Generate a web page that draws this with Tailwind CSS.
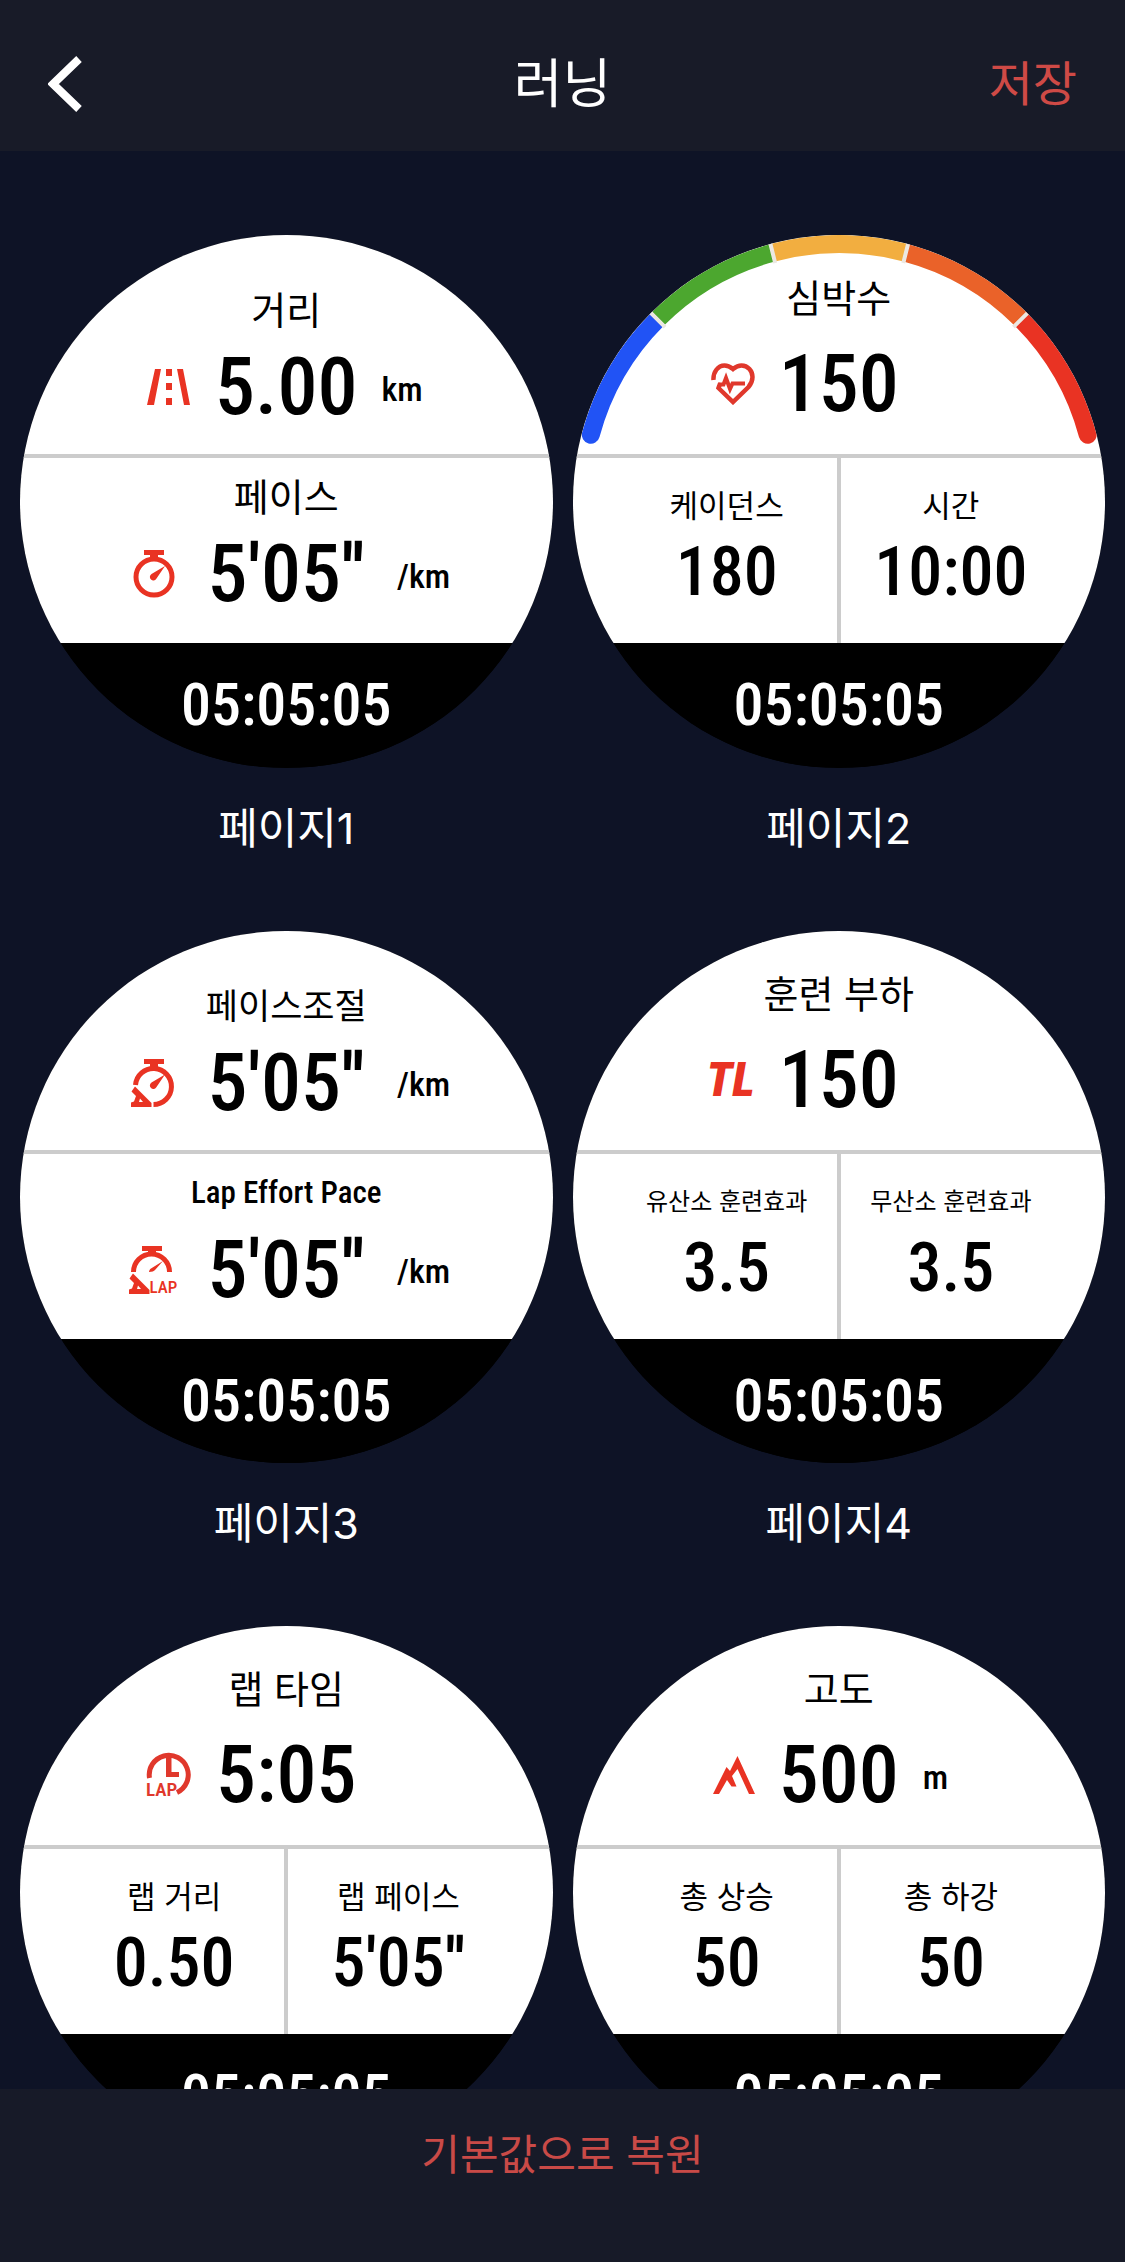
<!DOCTYPE html>
<html lang="ko">
<head>
  <meta charset="UTF-8">
  <meta name="viewport" content="width=device-width, initial-scale=1.0">
  <title>러닝</title>
  <script src="https://cdn.jsdelivr.net/npm/@tailwindcss/browser@4"></script>
</head>
<body class="h-screen flex flex-col bg-[#0e1326] text-white font-['Inter','Noto_Sans_CJK_KR',sans-serif]">

  <!-- Header -->
  <header class="grid grid-cols-[1fr_auto_1fr] items-center h-[151px] px-12 pt-4 bg-[#181b28] shrink-0">
    <button type="button" aria-label="뒤로" class="justify-self-start">
      <svg class="w-9 h-14" viewBox="0 0 36 56" fill="none" stroke="currentColor" stroke-width="8"><path d="M31 3 5 28l26 25"/></svg>
    </button>
    <h1 class="text-[53px] leading-[64px]">러닝</h1>
    <button type="button" class="justify-self-end text-[48px] leading-[64px] text-[#cf4a46]">저장</button>
  </header>

  <!-- Page previews -->
  <main class="flex-1 min-h-0 overflow-y-auto [scrollbar-width:none] px-5 pt-[84px]">
    <div class="grid grid-cols-2 gap-x-5 gap-y-[73px]">

      <!-- Page 1 -->
      <figure>
        <div class="aspect-square rounded-full overflow-hidden bg-black text-black grid grid-rows-[223fr_185fr_124fr]">
          <section class="flex flex-col items-center gap-[11px] pt-[53px] border-b-4 border-[#ccc] bg-white">
            <h2 class="text-[38px] leading-[44px]">거리</h2>
            <div class="w-full grid grid-cols-[1fr_auto_1fr] items-center gap-6 font-['Roboto_Condensed',sans-serif]">
              <svg class="w-11 h-9 justify-self-end text-[#e93323]" viewBox="0 0 44 36" fill="currentColor"><path d="M8 0h6L7 36H0zM30 0h6l7 36h-6zM19 0h6v7h-6zM19 14h6v7h-6zM19 29h6v7h-6z"/></svg>
              <span class="text-[80px] leading-[88px] font-medium">5.00</span>
              <span class="text-[34px] font-medium pt-1">km</span>
            </div>
          </section>
          <section class="flex flex-col items-center gap-[11px] pt-[17px] bg-white">
            <h2 class="text-[38px] leading-[44px]">페이스</h2>
            <div class="w-full grid grid-cols-[1fr_auto_1fr] items-center gap-8 font-['Roboto_Condensed',sans-serif]">
              <svg class="w-[42px] h-12 justify-self-end text-[#e93323]" viewBox="0 0 42 48" fill="currentColor"><circle cx="21" cy="27" r="18" fill="none" stroke="currentColor" stroke-width="5"/><path d="M11 0h20v5h-6v4h-8V5h-6zM32 16l-8.500 12.500a3.500 3.500 0 1 1-5-4.500z"/></svg>
              <span class="text-[80px] leading-[88px] font-medium">5'05''</span>
              <span class="text-[34px] font-medium pt-1">/km</span>
            </div>
          </section>
          <div class="bg-black text-white text-center pt-[30px] text-[60px] leading-[64px] font-medium font-['Roboto_Condensed',sans-serif]">05:05:05</div>
        </div>
        <figcaption class="mt-[30px] text-center text-[43px] leading-[60px]">페이지1</figcaption>
      </figure>

      <!-- Page 2 -->
      <figure>
        <div class="relative aspect-square rounded-full overflow-hidden bg-black text-black grid grid-rows-[223fr_185fr_124fr]">
          <!-- Heart rate zones -->
          <svg class="absolute inset-0 w-full h-full" viewBox="0 0 532 532" fill="none" stroke-width="18">
            <path stroke="#2153f5" stroke-linecap="round" d="M17.800 199.500A257 257 0 0 1 84.300 84.300"/>
            <path stroke="#e93323" stroke-linecap="round" d="M447.700 84.300A257 257 0 0 1 514.200 199.500"/>
            <path stroke="#4ca72f" d="M84.300 84.300A257 257 0 0 1 199.500 17.800"/>
            <path stroke="#f2ae40" d="M199.500 17.800A257 257 0 0 1 332.500 17.800"/>
            <path stroke="#ea6229" d="M332.500 17.800A257 257 0 0 1 447.700 84.300"/>
            <path stroke="#ebe8e2" stroke-width="4" d="M92 92 77 77M202 28l-5-20M330 28l5-20M440 92l15-15"/>
          </svg>
          <section class="flex flex-col items-center gap-5 pt-[41px] border-b-4 border-[#ccc] bg-white">
            <h2 class="text-[38px] leading-[44px]">심박수</h2>
            <div class="w-full grid grid-cols-[1fr_auto_1fr] items-center gap-6 font-['Roboto_Condensed',sans-serif]">
              <svg class="w-11 h-[42px] justify-self-end text-[#e0382c]" viewBox="0 0 44 42" fill="none" stroke="currentColor" stroke-width="4.500"><path d="M2.500 17C2 9 7 2.500 13.500 2.500c3.500 0 6 1.500 8.500 3.500 2.500-2 5-3.500 8.500-3.500C37 2.500 41.500 8 41.500 14c0 4-1.500 7-4 10L22 39 7.500 25l1.800-5"/><path stroke-width="4" d="M34 20.500H21.500L19 26l-4-11-2.500 6.500H8"/></svg>
              <span class="text-[80px] leading-[88px] font-medium">150</span>
              <span></span>
            </div>
          </section>
          <div class="grid grid-cols-2 px-[42px] relative bg-white">
            <div class="absolute inset-y-0 left-1/2 w-1 -translate-x-1/2 bg-[#ccc]"></div>
            <section class="flex flex-col items-center gap-[10px] pt-[30px]">
              <h2 class="text-[31px] leading-9">케이던스</h2>
              <span class="text-[68px] leading-[76px] font-medium font-['Roboto_Condensed',sans-serif]">180</span>
            </section>
            <section class="flex flex-col items-center gap-[10px] pt-[30px]">
              <h2 class="text-[31px] leading-9">시간</h2>
              <span class="text-[68px] leading-[76px] font-medium font-['Roboto_Condensed',sans-serif]">10:00</span>
            </section>
          </div>
          <div class="bg-black text-white text-center pt-[30px] text-[60px] leading-[64px] font-medium font-['Roboto_Condensed',sans-serif]">05:05:05</div>
        </div>
        <figcaption class="mt-[30px] text-center text-[43px] leading-[60px]">페이지2</figcaption>
      </figure>

      <!-- Page 3 -->
      <figure>
        <div class="aspect-square rounded-full overflow-hidden bg-black text-black grid grid-rows-[223fr_185fr_124fr]">
          <section class="flex flex-col items-center gap-[11px] pt-[53px] border-b-4 border-[#ccc] bg-white">
            <h2 class="text-[35px] leading-[44px]">페이스조절</h2>
            <div class="w-full grid grid-cols-[1fr_auto_1fr] items-center gap-8 font-['Roboto_Condensed',sans-serif]">
              <svg class="w-11 h-12 justify-self-end text-[#e93323]" viewBox="0 0 44 48" fill="currentColor"><path fill="none" stroke="currentColor" stroke-width="5" d="M4.500 26a18 18 0 1 1 18 19.500"/><path d="M13 0h20v5h-6v4h-8V5h-6zM34 15.500 25.500 28a3.500 3.500 0 1 1-5-4.500z"/><path fill-rule="evenodd" d="M4 27.500 20.500 44v4H0v-4.500l3-1 2-5.500-4.500-4.500zM8 43h4l-3-3.500z"/></svg>
              <span class="text-[80px] leading-[88px] font-medium">5'05''</span>
              <span class="text-[34px] font-medium pt-1">/km</span>
            </div>
          </section>
          <section class="flex flex-col items-center gap-[11px] pt-[17px] bg-white">
            <h2 class="text-[31px] leading-[44px] font-medium font-['Roboto_Condensed',sans-serif]">Lap Effort Pace</h2>
            <div class="w-full grid grid-cols-[1fr_auto_1fr] items-center gap-8 font-['Roboto_Condensed',sans-serif]">
              <svg class="w-[46px] h-12 justify-self-end overflow-visible text-[#e93323]" viewBox="0 0 46 48" fill="currentColor"><path fill="none" stroke="currentColor" stroke-width="5" d="M4.500 26a18 18 0 0 1 36 0"/><path d="M13 0h20v5h-6v4h-8V5h-6zM34 15l-8 9c-1 1-3 2-6 2 0-1.500 1-3 2-3.500z"/><path fill-rule="evenodd" d="M4 27.500 20.500 44v4H0v-4.500l3-1 2-5.500-4.500-4.500zM8 43h4l-3-3.500z"/><text x="20.500" y="47" font-size="17" font-weight="500">LAP</text></svg>
              <span class="text-[80px] leading-[88px] font-medium">5'05''</span>
              <span class="text-[34px] font-medium pt-1">/km</span>
            </div>
          </section>
          <div class="bg-black text-white text-center pt-[30px] text-[60px] leading-[64px] font-medium font-['Roboto_Condensed',sans-serif]">05:05:05</div>
        </div>
        <figcaption class="mt-[30px] text-center text-[43px] leading-[60px]">페이지3</figcaption>
      </figure>

      <!-- Page 4 -->
      <figure>
        <div class="aspect-square rounded-full overflow-hidden bg-black text-black grid grid-rows-[223fr_185fr_124fr]">
          <section class="flex flex-col items-center gap-5 pt-[41px] border-b-4 border-[#ccc] bg-white">
            <h2 class="text-[38px] leading-[44px]">훈련 부하</h2>
            <div class="w-full grid grid-cols-[1fr_auto_1fr] items-center gap-6 font-['Roboto_Condensed',sans-serif]">
              <span class="justify-self-end text-[48px] leading-[48px] font-black italic text-[#e93323]">TL</span>
              <span class="text-[80px] leading-[88px] font-medium">150</span>
              <span></span>
            </div>
          </section>
          <div class="grid grid-cols-2 px-[42px] relative bg-white">
            <div class="absolute inset-y-0 left-1/2 w-1 -translate-x-1/2 bg-[#ccc]"></div>
            <section class="flex flex-col items-center gap-[10px] pt-[30px]">
              <h2 class="text-[24px] leading-9">유산소 훈련효과</h2>
              <span class="text-[68px] leading-[76px] font-medium font-['Roboto_Condensed',sans-serif]">3.5</span>
            </section>
            <section class="flex flex-col items-center gap-[10px] pt-[30px]">
              <h2 class="text-[24px] leading-9">무산소 훈련효과</h2>
              <span class="text-[68px] leading-[76px] font-medium font-['Roboto_Condensed',sans-serif]">3.5</span>
            </section>
          </div>
          <div class="bg-black text-white text-center pt-[30px] text-[60px] leading-[64px] font-medium font-['Roboto_Condensed',sans-serif]">05:05:05</div>
        </div>
        <figcaption class="mt-[30px] text-center text-[43px] leading-[60px]">페이지4</figcaption>
      </figure>

      <!-- Page 5 -->
      <figure>
        <div class="aspect-square rounded-full overflow-hidden bg-black text-black grid grid-rows-[223fr_185fr_124fr]">
          <section class="flex flex-col items-center gap-5 pt-[41px] border-b-4 border-[#ccc] bg-white">
            <h2 class="text-[38px] leading-[44px]">랩 타임</h2>
            <div class="w-full grid grid-cols-[1fr_auto_1fr] items-center gap-6 font-['Roboto_Condensed',sans-serif]">
              <svg class="w-[46px] h-[46px] justify-self-end overflow-visible text-[#e0382c]" viewBox="0 0 46 46" fill="currentColor"><path fill="none" stroke="currentColor" stroke-width="5" d="M3.500 26a19.500 19.500 0 1 1 27.500 14.500"/><path d="M20 3h5.500v17H33v5H20z"/><text x="0" y="44" font-size="19" font-weight="600">LAP</text></svg>
              <span class="text-[80px] leading-[88px] font-medium">5:05</span>
              <span></span>
            </div>
          </section>
          <div class="grid grid-cols-2 px-[42px] relative bg-white">
            <div class="absolute inset-y-0 left-1/2 w-1 -translate-x-1/2 bg-[#ccc]"></div>
            <section class="flex flex-col items-center gap-[10px] pt-[30px]">
              <h2 class="text-[31px] leading-9">랩 거리</h2>
              <span class="text-[68px] leading-[76px] font-medium font-['Roboto_Condensed',sans-serif]">0.50</span>
            </section>
            <section class="flex flex-col items-center gap-[10px] pt-[30px]">
              <h2 class="text-[31px] leading-9">랩 페이스</h2>
              <span class="text-[68px] leading-[76px] font-medium font-['Roboto_Condensed',sans-serif]">5'05''</span>
            </section>
          </div>
          <div class="bg-black text-white text-center pt-[30px] text-[60px] leading-[64px] font-medium font-['Roboto_Condensed',sans-serif]">05:05:05</div>
        </div>
      </figure>

      <!-- Page 6 -->
      <figure>
        <div class="aspect-square rounded-full overflow-hidden bg-black text-black grid grid-rows-[223fr_185fr_124fr]">
          <section class="flex flex-col items-center gap-5 pt-[41px] border-b-4 border-[#ccc] bg-white">
            <h2 class="text-[38px] leading-[44px]">고도</h2>
            <div class="w-full grid grid-cols-[1fr_auto_1fr] items-center gap-6 font-['Roboto_Condensed',sans-serif]">
              <svg class="w-[42px] h-[38px] justify-self-end text-[#e93323]" viewBox="0 0 42 38" fill="currentColor"><path d="M0 38 13.500 11l3.500 4L24.500 0 42 38h-6L24.500 13 19 20l4.500 10.500h-5L14 24 6 38z"/></svg>
              <span class="text-[80px] leading-[88px] font-medium">500</span>
              <span class="text-[34px] font-medium pt-1">m</span>
            </div>
          </section>
          <div class="grid grid-cols-2 px-[42px] relative bg-white">
            <div class="absolute inset-y-0 left-1/2 w-1 -translate-x-1/2 bg-[#ccc]"></div>
            <section class="flex flex-col items-center gap-[10px] pt-[30px]">
              <h2 class="text-[31px] leading-9">총 상승</h2>
              <span class="text-[68px] leading-[76px] font-medium font-['Roboto_Condensed',sans-serif]">50</span>
            </section>
            <section class="flex flex-col items-center gap-[10px] pt-[30px]">
              <h2 class="text-[31px] leading-9">총 하강</h2>
              <span class="text-[68px] leading-[76px] font-medium font-['Roboto_Condensed',sans-serif]">50</span>
            </section>
          </div>
          <div class="bg-black text-white text-center pt-[30px] text-[60px] leading-[64px] font-medium font-['Roboto_Condensed',sans-serif]">05:05:05</div>
        </div>
      </figure>

    </div>
  </main>

  <!-- Footer -->
  <footer class="flex justify-center items-start h-[173px] pt-9 bg-[#171a28] shrink-0">
    <button type="button" class="text-[42px] leading-[60px] text-[#c94a47]">기본값으로 복원</button>
  </footer>

</body>
</html>
